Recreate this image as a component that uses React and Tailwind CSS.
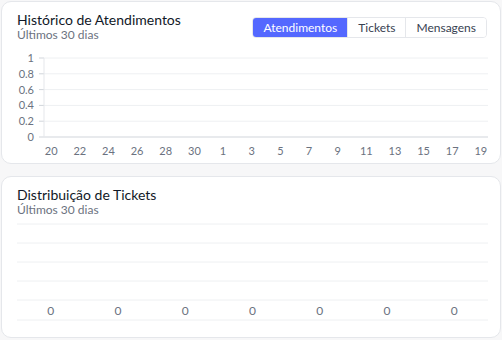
import { useState } from "react"

const yTicks = [
  { label: "1", y: 13 },
  { label: "0.8", y: 28.8 },
  { label: "0.6", y: 44.6 },
  { label: "0.4", y: 60.4 },
  { label: "0.2", y: 76.2 },
  { label: "0", y: 92 },
]

const days = [20, 21, 22, 23, 24, 25, 26, 27, 28, 29, 30, 31, 1, 2, 3, 4, 5, 6, 7, 8, 9, 10, 11, 12, 13, 14, 15, 16, 17, 18, 19]

const tabs = ["Atendimentos", "Tickets", "Mensagens"]

function Header({ title, children }) {
  return (
    <div className="flex items-start justify-between">
      <div>
        <h2 className="text-[14px] leading-[17px] text-[#111827]">{title}</h2>
        <p className="text-[12px] leading-[14px] text-[#6b7280]">Últimos 30 dias</p>
      </div>
      {children}
    </div>
  )
}

function HistoryChart() {
  const left = 27
  const right = 471
  const slot = (right - left) / days.length

  return (
    <svg width="470" height="116" className="block overflow-visible" style={{ fontFamily: "Lato, sans-serif" }}>
      {yTicks.map((t) => (
        <g key={t.label}>
          <line x1={left} x2={right} y1={t.y} y2={t.y} stroke={t.label === "0" ? "#d1d5db" : "#eef0f2"} />
          <line x1={left - 5} x2={left} y1={t.y} y2={t.y} stroke="#d1d5db" />
          <text x={left - 10} y={t.y + 4} textAnchor="end" fontSize="11" fill="#6b7280">
            {t.label}
          </text>
        </g>
      ))}
      <line x1={left} x2={left} y1={13} y2={92} stroke="#e5e7eb" />
      {days.map((d, i) =>
        i % 2 === 0 ? (
          <text key={i} x={left + slot * i + slot / 2} y={110} textAnchor="middle" fontSize="11" fill="#6b7280">
            {d}
          </text>
        ) : null
      )}
    </svg>
  )
}

function TicketsChart() {
  const lines = [7, 26, 45, 64, 83, 103]
  const col = 471 / 7

  return (
    <svg width="470" height="116" className="block overflow-visible" style={{ fontFamily: "Lato, sans-serif" }}>
      {lines.map((y) => (
        <line key={y} x1={0} x2={471} y1={y} y2={y} stroke="#eef0f2" />
      ))}
      {[0, 1, 2, 3, 4, 5, 6].map((i) => (
        <text key={i} x={col * i + col / 2} y={98} textAnchor="middle" fontSize="12" fill="#6b7280">
          0
        </text>
      ))}
    </svg>
  )
}

export default function App() {
  const [tab, setTab] = useState("Atendimentos")

  return (
    <div className="flex h-[340px] w-[502px] flex-col gap-3 bg-[#f7f7f8] p-px" style={{ fontFamily: "Lato, sans-serif" }}>
      <div className="h-[163px] overflow-hidden rounded-[10px] border border-[#e5e7eb] bg-white px-[15px] pt-[9px]">
        <Header title="Histórico de Atendimentos">
          <div className="mt-[6px] mr-[-2px] flex overflow-hidden rounded-[4px] border border-[#e5e7eb]">
            {tabs.map((t, i) => (
              <button
                key={t}
                onClick={() => setTab(t)}
                className={
                  "h-[19px] px-[10px] text-[12px] leading-[19px] " +
                  (tab === t ? "bg-[#5468ff] text-white" : "bg-white text-[#374151]") +
                  (i > 0 ? " border-l border-[#e5e7eb]" : "")
                }
              >
                {t}
              </button>
            ))}
          </div>
        </Header>
        <div className="mt-[3px]">
          <HistoryChart />
        </div>
      </div>

      <div className="h-[162px] overflow-hidden rounded-[10px] border border-[#e5e7eb] bg-white px-[15px] pt-[9px]">
        <Header title="Distribuição de Tickets" />
        <TicketsChart />
      </div>
    </div>
  )
}
